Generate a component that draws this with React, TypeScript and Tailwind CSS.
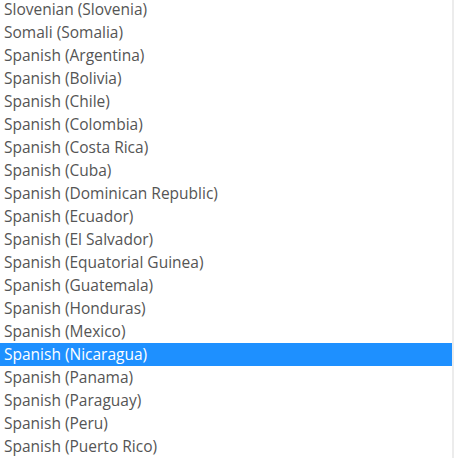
import React from "react";

const items = [
  "Slovenian (Slovenia)",
  "Somali (Somalia)",
  "Spanish (Argentina)",
  "Spanish (Bolivia)",
  "Spanish (Chile)",
  "Spanish (Colombia)",
  "Spanish (Costa Rica)",
  "Spanish (Cuba)",
  "Spanish (Dominican Republic)",
  "Spanish (Ecuador)",
  "Spanish (El Salvador)",
  "Spanish (Equatorial Guinea)",
  "Spanish (Guatemala)",
  "Spanish (Honduras)",
  "Spanish (Mexico)",
  "Spanish (Nicaragua)",
  "Spanish (Panama)",
  "Spanish (Paraguay)",
  "Spanish (Peru)",
  "Spanish (Puerto Rico)",
];

export default function App() {
  return (
    <div className="w-[454px] h-[458px] overflow-hidden bg-white flex">
      <div className="w-[452px] flex flex-col -mt-[2px]">
        {items.map((t) => {
          const sel = t === "Spanish (Nicaragua)";
          return (
            <div
              key={t}
              className={
                sel
                  ? "h-[23px] shrink-0 pl-[4px] flex items-center bg-[#1e90ff] text-white text-[15.5px] leading-[23px] whitespace-nowrap"
                  : "h-[23px] shrink-0 pl-[4px] flex items-center text-[#555555] text-[15.5px] leading-[23px] whitespace-nowrap"
              }
              style={{ fontFamily: '"Open Sans", sans-serif' }}
            >
              {t}
            </div>
          );
        })}
      </div>
      <div className="w-[2px] h-full bg-[#ececec]" />
    </div>
  );
}
